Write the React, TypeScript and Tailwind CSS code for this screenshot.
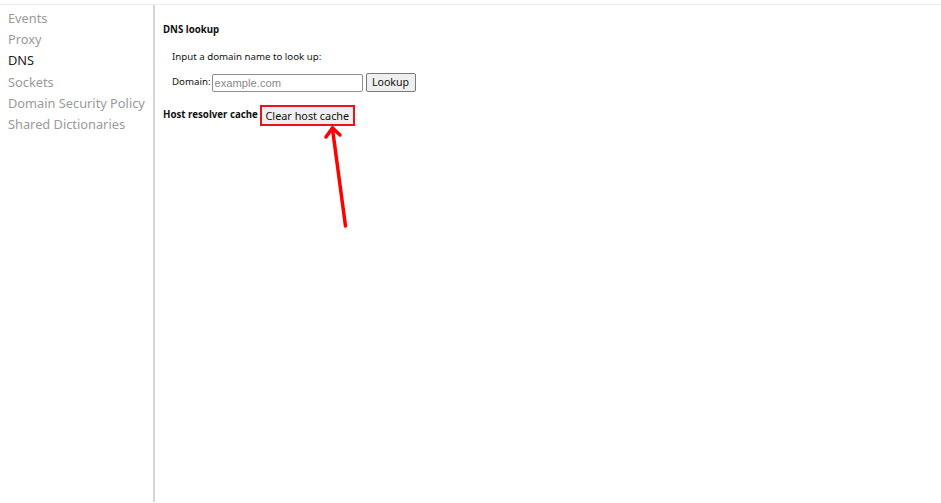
import { useState } from "react"

const sections = [
  "Events",
  "Proxy",
  "DNS",
  "Sockets",
  "Domain Security Policy",
  "Shared Dictionaries",
]

export default function App() {
  const [domain, setDomain] = useState("")
  const active = "DNS"

  return (
    <div className="relative h-[503px] w-[941px] overflow-hidden bg-white font-['Segoe_UI','Noto_Sans',sans-serif]">
      <div className="h-[5px] border-b border-[#ececec]" />

      <div className="flex h-[497px]">
        {/* Sidebar */}
        <nav className="w-[155px] shrink-0 border-r-2 border-[#d6d6d6] pl-2 pt-[3px]">
          {sections.map((s) => (
            <div
              key={s}
              className={`h-[21.2px] text-[12.8px] leading-[21px] ${s === active ? "text-[#222]" : "text-[#9a9a9a]"}`}
            >
              {s}
            </div>
          ))}
        </nav>

        {/* DNS panel */}
        <main className="flex-1 pl-2 pt-[18px] text-[9.7px] text-[#111]">
          <h2 className="font-bold leading-[14px]">DNS lookup</h2>
          <div className="pl-[9px]">
            <p className="mt-[13px] leading-[14px]">Input a domain name to look up:</p>
            <div className="mt-[9px] flex h-[19px] items-center gap-[1px]">
              <span>Domain:</span>
              <input
                value={domain}
                onChange={(e) => setDomain(e.target.value)}
                placeholder="example.com"
                className="h-[18px] w-[151px] rounded-[2px] border border-[#8f8f8f] px-[2px] text-[11.2px] font-['Liberation_Sans',sans-serif] outline-none placeholder:text-[#8a8a8a]"
              />
              <button className="ml-[2px] h-[19px] w-[50px] rounded-[2px] border border-[#7a7a7a] bg-[#efefef] text-[10.6px] leading-[15px]">
                Lookup
              </button>
            </div>
          </div>
          <div className="mt-[13px] flex items-center gap-[2px]">
            <span className="font-bold">Host resolver cache</span>
            <button className="h-[21px] w-[95px] border-2 border-[#e8141c] bg-[#efefef] text-[10.85px] leading-[15px]">
              Clear host cache
            </button>
          </div>
        </main>
      </div>

      {/* Annotation arrow */}
      <svg className="absolute left-0 top-0" width="941" height="503">
        <g stroke="#ff0000" strokeWidth="3.5" strokeLinecap="round" fill="none">
          <line x1="345.5" y1="226" x2="332.5" y2="129" />
          <polyline points="326,137 332.5,128 340,135" strokeLinejoin="miter" />
        </g>
      </svg>
    </div>
  )
}
